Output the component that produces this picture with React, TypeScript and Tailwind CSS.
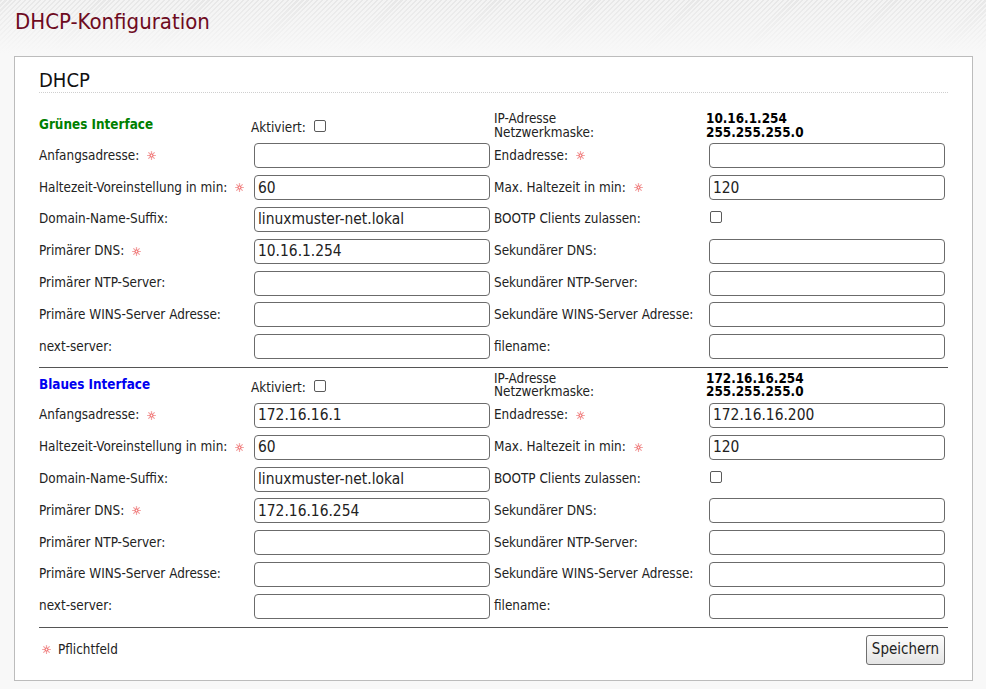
import React from "react"

type Row = {
  l1: string
  req1?: boolean
  v1: string
  l2: string
  req2?: boolean
  v2?: string
  check2?: boolean
}

type Block = {
  title: string
  color: string
  ip: string
  mask: string
  rows: Row[]
}

const blocks: Block[] = [
  {
    title: "Grünes Interface",
    color: "text-[#008000]",
    ip: "10.16.1.254",
    mask: "255.255.255.0",
    rows: [
      { l1: "Anfangsadresse:", req1: true, v1: "", l2: "Endadresse:", req2: true, v2: "" },
      { l1: "Haltezeit-Voreinstellung in min:", req1: true, v1: "60", l2: "Max. Haltezeit in min:", req2: true, v2: "120" },
      { l1: "Domain-Name-Suffix:", v1: "linuxmuster-net.lokal", l2: "BOOTP Clients zulassen:", check2: true },
      { l1: "Primärer DNS:", req1: true, v1: "10.16.1.254", l2: "Sekundärer DNS:", v2: "" },
      { l1: "Primärer NTP-Server:", v1: "", l2: "Sekundärer NTP-Server:", v2: "" },
      { l1: "Primäre WINS-Server Adresse:", v1: "", l2: "Sekundäre WINS-Server Adresse:", v2: "" },
      { l1: "next-server:", v1: "", l2: "filename:", v2: "" },
    ],
  },
  {
    title: "Blaues Interface",
    color: "text-[#0000f0]",
    ip: "172.16.16.254",
    mask: "255.255.255.0",
    rows: [
      { l1: "Anfangsadresse:", req1: true, v1: "172.16.16.1", l2: "Endadresse:", req2: true, v2: "172.16.16.200" },
      { l1: "Haltezeit-Voreinstellung in min:", req1: true, v1: "60", l2: "Max. Haltezeit in min:", req2: true, v2: "120" },
      { l1: "Domain-Name-Suffix:", v1: "linuxmuster-net.lokal", l2: "BOOTP Clients zulassen:", check2: true },
      { l1: "Primärer DNS:", req1: true, v1: "172.16.16.254", l2: "Sekundärer DNS:", v2: "" },
      { l1: "Primärer NTP-Server:", v1: "", l2: "Sekundärer NTP-Server:", v2: "" },
      { l1: "Primäre WINS-Server Adresse:", v1: "", l2: "Sekundäre WINS-Server Adresse:", v2: "" },
      { l1: "next-server:", v1: "", l2: "filename:", v2: "" },
    ],
  },
]

// small pink "required" star
const Star = ({ className = "" }: { className?: string }) => (
  <svg width="9" height="9" viewBox="0 0 9 9" className={className}>
    <g stroke="#f3a3a3" strokeWidth="1.2" strokeLinecap="round">
      <line x1="4.5" y1="0.6" x2="4.5" y2="8.4" />
      <line x1="0.6" y1="4.5" x2="8.4" y2="4.5" />
      <line x1="1.7" y1="1.7" x2="7.3" y2="7.3" />
      <line x1="7.3" y1="1.7" x2="1.7" y2="7.3" />
    </g>
    <circle cx="4.5" cy="4.5" r="1.9" fill="#f07070" />
    <circle cx="4.5" cy="4.5" r="0.9" fill="#ffffff" />
  </svg>
)

const Checkbox = ({ className = "" }: { className?: string }) => (
  <span className={`inline-block size-[12px] rounded-[2px] border border-[#5a5a5a] bg-white ${className}`} />
)

const Field = ({ value }: { value: string }) => (
  <input
    defaultValue={value}
    className="h-[25px] w-[236px] rounded-[4px] border border-[#6b6b6b] bg-white px-[3px] text-[15.4px] text-[#222] outline-none"
  />
)

const Label = ({ text, req }: { text: string; req?: boolean }) => (
  <div className="flex items-center">
    <span>{text}</span>
    {req && <Star className="ml-2" />}
  </div>
)

const InterfaceBlock = ({ block }: { block: Block }) => (
  <div>
    <div className="grid h-[29px] grid-cols-[215px_236px_219px_236px] items-center">
      <div className={`font-bold ${block.color}`}>{block.title}</div>
      <div className="-ml-[3px] flex items-center pt-[6px]">
        <span>Aktiviert:</span>
        <Checkbox className="mb-[4px] ml-[8px]" />
      </div>
      <div className="pl-1 leading-[13.5px]">
        <div>IP-Adresse</div>
        <div>Netzwerkmaske:</div>
      </div>
      <div className="-ml-[3px] font-bold leading-[13.5px] text-black">
        <div>{block.ip}</div>
        <div>{block.mask}</div>
      </div>
    </div>
    {block.rows.map((row, i) => (
      <div key={i} className="grid h-[31.8px] grid-cols-[215px_236px_219px_236px] items-center">
        <Label text={row.l1} req={row.req1} />
        <Field value={row.v1} />
        <div className="pl-1">
          <Label text={row.l2} req={row.req2} />
        </div>
        {row.check2 ? (
          <div className="pl-[1px]">
            <Checkbox />
          </div>
        ) : (
          <Field value={row.v2 ?? ""} />
        )}
      </div>
    ))}
  </div>
)

export default function App() {
  return (
    <div className="min-h-screen w-full bg-[#f8f8f8] font-['DejaVu_Sans_Condensed','DejaVu_Sans',sans-serif] text-[13.4px] text-[#222] font-stretch-condensed">
      <div className="h-[56px] bg-[image:linear-gradient(to_bottom,rgba(248,248,248,0.35)_0%,rgba(248,248,248,1)_95%),repeating-linear-gradient(135deg,#dedede_0px,#dedede_1.5px,#f1f1f1_1.5px,#f1f1f1_3.5px)]">
        <h1 className="pl-[15px] pt-[9px] text-[22px] leading-[26px] text-[#6e0b1f]">DHCP-Konfiguration</h1>
      </div>
      <div className="ml-[14px] mr-[13px] border border-[#bcbcbc] bg-white px-6 pb-[15px] pt-[11px]">
        <h2 className="border-b border-dotted border-[#cfcfcf] text-[20px] leading-[24px] text-[#111]">DHCP</h2>
        <div className="mt-[18px]">
          <InterfaceBlock block={blocks[0]} />
          <div className="mt-[4px] h-px bg-[#555]" />
          <div className="mt-[3px]">
            <InterfaceBlock block={blocks[1]} />
          </div>
          <div className="mt-[4.5px] h-px bg-[#555]" />
        </div>
        <div className="mt-[7px] flex items-center justify-between pr-[3px]">
          <div className="flex items-center pl-[3px]">
            <Star />
            <span className="ml-[7px]">Pflichtfeld</span>
          </div>
          <button className="h-[30px] w-[79px] rounded-[3px] border border-[#6f6f6f] bg-[linear-gradient(to_bottom,#fdfdfd,#e4e4e4)] text-[15px] text-[#222]">
            Speichern
          </button>
        </div>
      </div>
    </div>
  )
}
